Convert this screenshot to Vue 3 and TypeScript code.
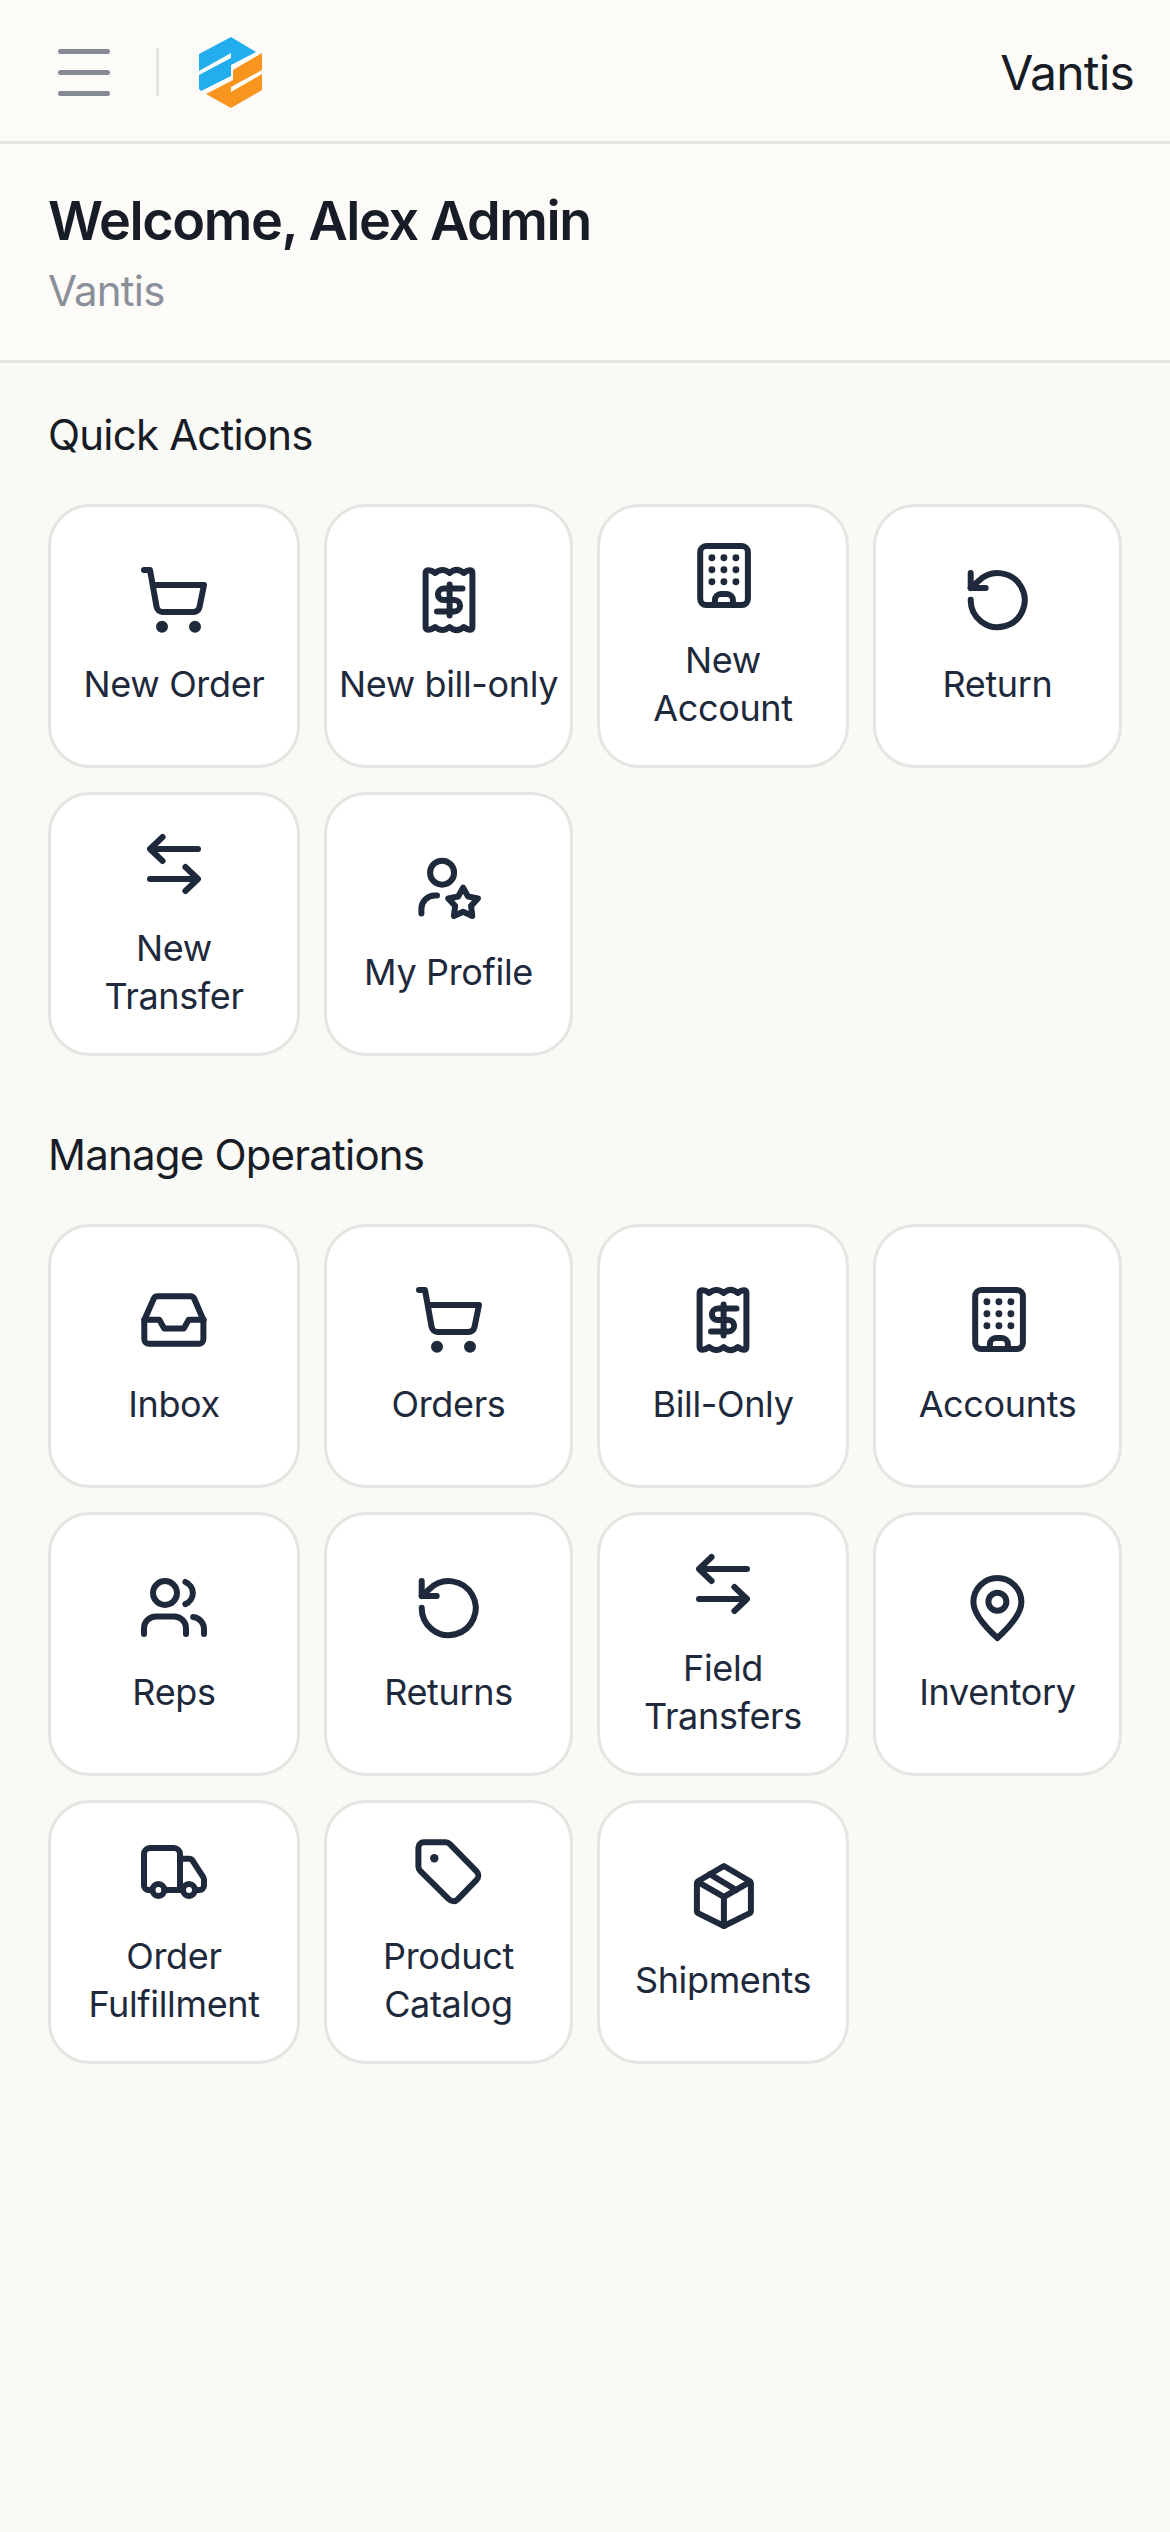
<template>
  <div class="page">
    <header class="topbar">
      <button class="menu-btn" aria-label="Menu">
        <span></span><span></span><span></span>
      </button>
      <div class="divider"></div>
      <svg class="logo" viewBox="0 0 63 71">
        <path fill="#22aeee" d="M32 0 L57 15 L32 28 L32 39 L2 54 L0 52 L0 38 L32 21 L32 16 L0 34 L0 17 Z" />
        <path fill="#f8951f" d="M63 16 L34 33 L34 43 L7 57 L32 71 L63 53 L63 37 L32 55 L32 50 L63 33 Z" />
      </svg>
      <span class="brand">Vantis</span>
    </header>

    <section class="welcome">
      <h1 class="welcome-title">Welcome, Alex Admin</h1>
      <p class="welcome-sub">Vantis</p>
    </section>

    <main class="content">
      <section v-for="group in groups" :key="group.title" class="group">
        <h2 class="group-title">{{ group.title }}</h2>
        <div class="tile-grid">
          <div v-for="item in group.items" :key="item.label" class="tile">
            <svg class="tile-icon" viewBox="0 0 24 24" fill="none" stroke="currentColor" stroke-width="2" stroke-linecap="round" stroke-linejoin="round" v-html="icons[item.icon]"></svg>
            <span class="tile-label">{{ item.label }}</span>
          </div>
        </div>
      </section>
    </main>
  </div>
</template>

<script setup lang="ts">
const icons: Record<string, string> = {
  cart: `<path d="M2 2H4l2.2 12.300a2 2 0 0 0 2 1.700h10.300a2 2 0 0 0 2-1.600L22 7H5"/><circle cx="8" cy="20.900" r="1" fill="currentColor"/><circle cx="19" cy="20.900" r="1" fill="currentColor"/>`,
  bill: `<path d="M4.200 21V3C4.200 2 5.500 1.600 7.400 3C8.900 1.700 10.700 1.700 12.200 3C13.700 1.700 15.400 1.700 16.900 3C18.800 1.600 19.800 2 19.800 3V21C19.800 22 18.800 22.400 16.900 21C15.400 22.300 13.700 22.300 12.200 21C10.700 22.300 8.900 22.300 7.400 21C5.500 22.400 4.200 22 4.200 21Z"/><path d="M16.500 8.200H10.200a1.900 1.900 0 0 0 0 3.800h3.600a1.900 1.900 0 0 1 0 3.800H8"/><path d="M12.200 6.800V17.200"/>`,
  building: `<rect x="4.400" y="2" width="15.900" height="19.700" rx="2"/><path d="M9.300 21.500V20a2 2 0 0 1 2-2h2a2 2 0 0 1 2 2v1.500"/><g fill="currentColor" stroke="none"><circle cx="8.300" cy="5.900" r="1.150"/><circle cx="12.300" cy="5.900" r="1.150"/><circle cx="16.300" cy="5.900" r="1.150"/><circle cx="8.300" cy="9.900" r="1.150"/><circle cx="12.300" cy="9.900" r="1.150"/><circle cx="16.300" cy="9.900" r="1.150"/><circle cx="8.300" cy="13.900" r="1.150"/><circle cx="12.300" cy="13.900" r="1.150"/><circle cx="16.300" cy="13.900" r="1.150"/></g>`,
  rotate: `<path d="M2.900 11.900a9 9 0 1 0 2.700-6.300L2.900 8"/><path d="M2.900 3v5h5"/>`,
  transfer: `<path d="M20 7H4.500"/><path d="M8.200 3 4 7 8.200 11"/><path d="M4 17H19.500"/><path d="M15.800 13 20 17 15.800 21"/>`,
  profile: `<circle cx="9.700" cy="6.900" r="4"/><path d="M2.800 20.500V19a4.500 4.500 0 0 1 4.500-4.500h.7"/><path d="M16.700 11.900 18.350 14.830 21.650 15.500 19.360 17.970 19.760 21.300 16.700 19.900 13.640 21.300 14.040 17.970 11.750 15.500 15.050 14.830Z"/>`,
  inbox: `<path d="M2.100 12 5.200 5a1.500 1.500 0 0 1 1.400-.9h10.800a1.500 1.500 0 0 1 1.400.9L21.800 12v6.400a1.500 1.500 0 0 1-1.500 1.500H3.600a1.500 1.500 0 0 1-1.500-1.500Z"/><path d="M2.100 11.900h5l1.600 2.900h6.600l1.600-2.900h5"/>`,
  users: `<circle cx="9" cy="7" r="4"/><path d="M15.800 3.300a4 4 0 0 1 0 7.400"/><path d="M2 20.700v-1.900a4 4 0 0 1 4-4h6a4 4 0 0 1 4 4v1.900"/><path d="M18.400 15a4 4 0 0 1 3.600 4v1.700"/>`,
  pin: `<path d="M11.800 2a8 8 0 0 1 8 8c0 4-4.700 9-8 12-3.300-3-8-8-8-12a8 8 0 0 1 8-8Z"/><circle cx="11.800" cy="9.900" r="3"/>`,
  truck: `<path d="M4.800 18H3.500A1.500 1.500 0 0 1 2 16.500V6a2 2 0 0 1 2-2h8a2 2 0 0 1 2 2v12H8.800"/><path d="M14 7.600h3a1.500 1.500 0 0 1 1.300.8l3.400 5.200c.2.300.3.600.3 1v1.900a1.500 1.500 0 0 1-1.500 1.500h-1"/><path d="M14 18h1"/><circle cx="6.800" cy="18" r="2"/><circle cx="17" cy="18" r="2"/>`,
  tag: `<path d="M1.800 3.900a1.800 1.800 0 0 1 1.800-1.800h7.300a2 2 0 0 1 1.400.6l8.900 9.100a2 2 0 0 1 0 2.800l-6.300 6.500a2 2 0 0 1-2.900 0L2.400 11.600a2 2 0 0 1-.6-1.400Z"/><circle cx="7.100" cy="7.400" r="1.400" fill="currentColor" stroke="none"/>`,
  box: `<path d="M12.300 2 20.800 7a1 1 0 0 1 .5.900v9a1 1 0 0 1-.5.900L12.300 22l-8.500-4.200a1 1 0 0 1-.5-.9v-9a1 1 0 0 1 .5-.9Z"/><path d="M3.600 7.300 12.300 12.300l8.700-5"/><path d="M12.300 12.300V22"/><path d="M7.600 4.700 16.400 10"/>`
}

interface Tile {
  label: string
  icon: string
}

const groups: { title: string; items: Tile[] }[] = [
  {
    title: 'Quick Actions',
    items: [
      { label: 'New Order', icon: 'cart' },
      { label: 'New bill-only', icon: 'bill' },
      { label: 'New\nAccount', icon: 'building' },
      { label: 'Return', icon: 'rotate' },
      { label: 'New\nTransfer', icon: 'transfer' },
      { label: 'My Profile', icon: 'profile' }
    ]
  },
  {
    title: 'Manage Operations',
    items: [
      { label: 'Inbox', icon: 'inbox' },
      { label: 'Orders', icon: 'cart' },
      { label: 'Bill-Only', icon: 'bill' },
      { label: 'Accounts', icon: 'building' },
      { label: 'Reps', icon: 'users' },
      { label: 'Returns', icon: 'rotate' },
      { label: 'Field\nTransfers', icon: 'transfer' },
      { label: 'Inventory', icon: 'pin' },
      { label: 'Order\nFulfillment', icon: 'truck' },
      { label: 'Product\nCatalog', icon: 'tag' },
      { label: 'Shipments', icon: 'box' }
    ]
  }
]
</script>

<style>
html, body {
  background: #f9f9f5;
}
</style>

<style scoped>
.page {
  min-height: 2532px;
  background: #f9f9f5;
  font-family: Inter, "Noto Sans", sans-serif;
  color: #1e293b;
}

.topbar {
  height: 144px;
  box-sizing: border-box;
  display: flex;
  align-items: center;
  padding: 3px 36px 0 58px;
  background: #fcfbf8;
  border-bottom: 3px solid #e5e5e1;
}

.menu-btn {
  width: 52px;
  display: flex;
  flex-direction: column;
  gap: 16px;
  padding: 0;
  border: none;
  background: none;
}

.menu-btn span {
  height: 5px;
  border-radius: 3px;
  background: #858a94;
}

.divider {
  width: 3px;
  height: 48px;
  margin-left: 46px;
  background: #e5e5e1;
}

.logo {
  width: 63px;
  height: 71px;
  margin-left: 40px;
}

.brand {
  margin-left: auto;
  font-size: 48px;
  letter-spacing: -0.8px;
  color: #171c26;
}

.welcome {
  padding: 41px 48px 42px;
  background: #fcfbf8;
  border-bottom: 3px solid #e5e5e1;
}

.welcome-title {
  margin: 0;
  font-size: 54px;
  line-height: 72px;
  font-weight: 600;
  letter-spacing: -1.4px;
  color: #171c26;
}

.welcome-sub {
  margin: 7px 0 0;
  font-size: 42px;
  line-height: 54px;
  letter-spacing: -0.8px;
  color: #8a8f99;
}

.content {
  padding: 48px 48px 0;
  display: flex;
  flex-direction: column;
  gap: 75px;
}

.group-title {
  margin: 0 0 45px;
  font-size: 42px;
  line-height: 48px;
  font-weight: 400;
  letter-spacing: -0.8px;
  color: #171c26;
}

.tile-grid {
  display: grid;
  grid-template-columns: 252px 249px 252px 249px;
  gap: 24px;
}

.tile {
  height: 264px;
  box-sizing: border-box;
  display: flex;
  flex-direction: column;
  align-items: center;
  justify-content: center;
  gap: 24px;
  background: #fff;
  border: 3px solid #e5e5e1;
  border-radius: 42px;
}

.tile-icon {
  width: 72px;
  height: 72px;
  flex-shrink: 0;
}

.tile-label {
  font-size: 36px;
  line-height: 48px;
  letter-spacing: -0.35px;
  text-align: center;
  white-space: pre-line;
  color: #1e293b;
}
</style>
